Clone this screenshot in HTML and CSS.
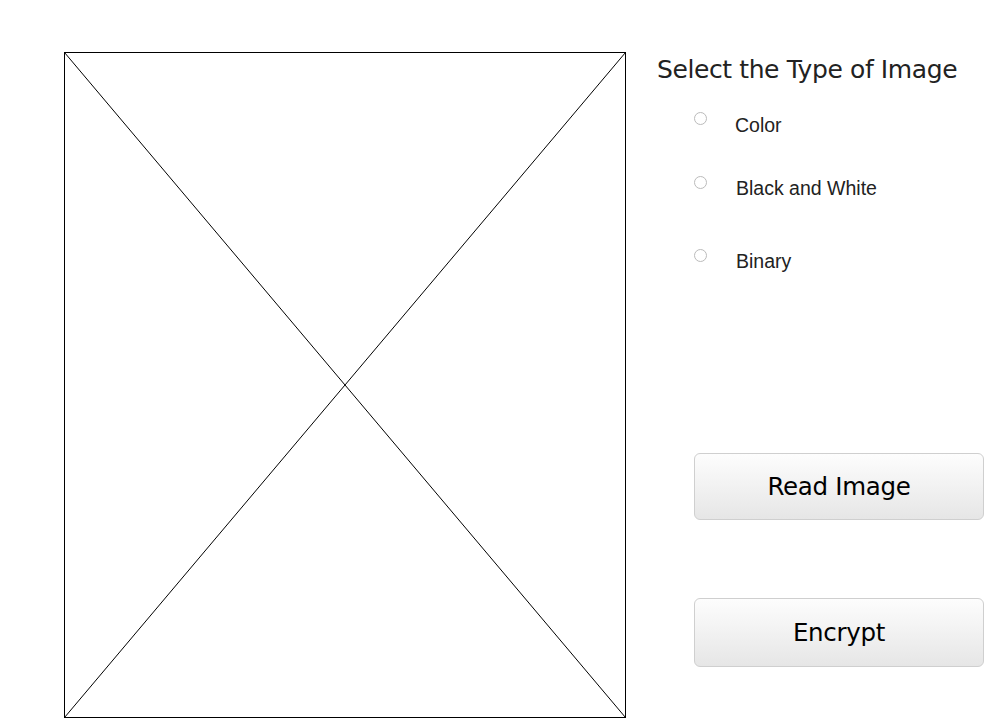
FILE: index.html
```html
<!DOCTYPE html>
<html>
<head>
<meta charset="utf-8">
<link rel="stylesheet" href="styles.css">
</head>
<body>
<div class="page">
  <div class="image-box">
    <svg class="placeholder" width="562" height="666" viewBox="0 0 562 666">
      <rect x="0.5" y="0.5" width="561" height="665" fill="#fff" stroke="#000" stroke-width="1"/>
      <line x1="0.5" y1="0.5" x2="561.5" y2="665.5" stroke="#000" stroke-width="1"/>
      <line x1="561.5" y1="0.5" x2="0.5" y2="665.5" stroke="#000" stroke-width="1"/>
    </svg>
  </div>
  <div class="panel">
    <h1 class="title">Select the Type of Image</h1>
    <div class="options">
      <label class="opt opt-color"><span class="radio"></span><span class="opt-text">Color</span></label>
      <label class="opt opt-bw"><span class="radio"></span><span class="opt-text">Black and White</span></label>
      <label class="opt opt-bin"><span class="radio"></span><span class="opt-text">Binary</span></label>
    </div>
    <div class="actions">
      <button class="btn btn-read">Read Image</button>
      <button class="btn btn-enc">Encrypt</button>
    </div>
  </div>
</div>
</body>
</html>
```
FILE: styles.css
```css
html, body {
  margin: 0;
  padding: 0;
  background: #fff;
  overflow: hidden;
}
.page {
  display: flex;
  width: 984px;
  height: 718px;
}
.image-box {
  padding: 52px 0 0 64px;
}
.placeholder {
  display: block;
}
.panel {
  display: flex;
  flex-direction: column;
  padding-left: 31px;
}
.title {
  margin: 55px 0 0 0;
  font-family: "DejaVu Sans", sans-serif;
  font-weight: normal;
  font-size: 25px;
  line-height: 30px;
  color: #222;
  letter-spacing: -0.4px;
  white-space: nowrap;
}
.options {
  display: flex;
  flex-direction: column;
  padding-left: 37px;
}
.opt {
  display: flex;
  align-items: flex-start;
  font-family: "Liberation Sans", Arial, sans-serif;
  font-size: 19.5px;
  line-height: 22px;
  color: #222;
}
.radio {
  width: 11px;
  height: 11px;
  border: 1px solid #bbb;
  border-radius: 50%;
  background: #fff;
  flex: none;
}
.opt-text {
  margin-left: 28px;
  margin-top: 2px;
}
.opt-color { margin-top: 27px; }
.opt-bw { margin-top: 40px; }
.opt-bw .opt-text { margin-left: 29px; margin-top: 1px; }
.opt-bin { margin-top: 50px; }
.opt-bin .opt-text { margin-left: 29px; margin-top: 1px; }
.actions {
  display: flex;
  flex-direction: column;
  padding-left: 37px;
}
.btn {
  width: 290px;
  height: 67px;
  border: 1px solid #cfcfcf;
  border-radius: 6px;
  background: linear-gradient(#fdfdfd, #e6e6e6);
  font-family: "DejaVu Sans", sans-serif;
  font-size: 24.5px;
  color: #000;
  padding: 0;
  letter-spacing: -0.3px;
}
.btn-read { margin-top: 181px; }
.btn-enc { margin-top: 78px; height: 69px; }
```
